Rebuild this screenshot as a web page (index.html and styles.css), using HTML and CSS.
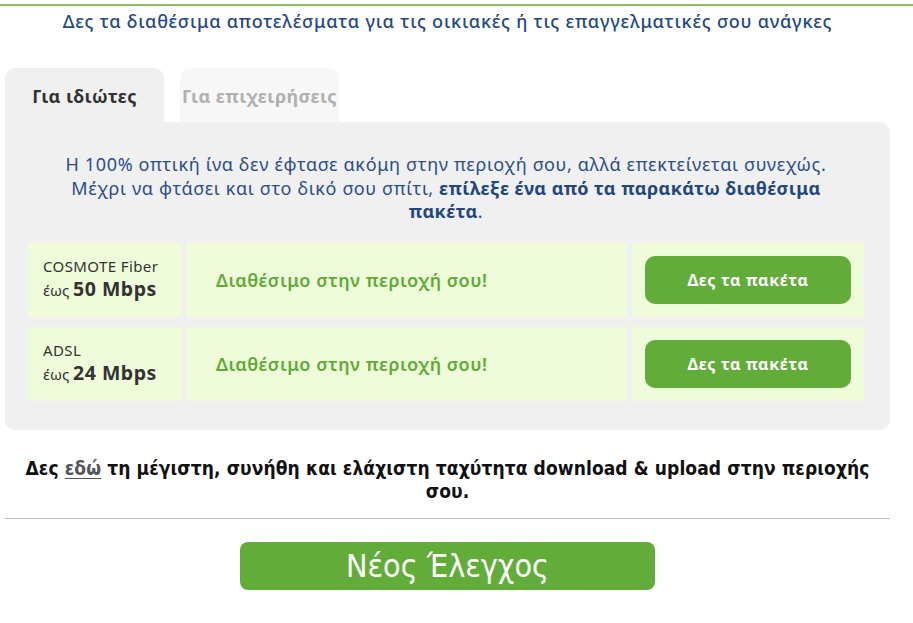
FILE: index.html
```html
<!DOCTYPE html>
<html lang="el">
<head>
<meta charset="utf-8">
<title>Διαθεσιμότητα</title>
<link rel="stylesheet" href="styles.css">
</head>
<body>
<div class="topline"></div>
<div class="wrap">
  <h2 class="heading">Δες τα διαθέσιμα αποτελέσματα για τις οικιακές ή τις επαγγελματικές σου ανάγκες</h2>
  <div class="tabs">
    <div class="tab active">Για ιδιώτες</div>
    <div class="tab">Για επιχειρήσεις</div>
  </div>
  <div class="panel">
    <p class="info">Η 100% οπτική ίνα δεν έφτασε ακόμη στην περιοχή σου, αλλά επεκτείνεται συνεχώς.<br>Μέχρι να φτάσει και στο δικό σου σπίτι, <strong>επίλεξε ένα από τα παρακάτω διαθέσιμα<br>πακέτα</strong>.</p>
    <div class="rows">
      <div class="cell name">
        <div class="tech">COSMOTE Fiber</div>
        <div class="speed">έως <b>50 Mbps</b></div>
      </div>
      <div class="cell status">Διαθέσιμο στην περιοχή σου!</div>
      <div class="cell action"><a class="btn" href="#">Δες τα πακέτα</a></div>

      <div class="cell name">
        <div class="tech">ADSL</div>
        <div class="speed">έως <b>24 Mbps</b></div>
      </div>
      <div class="cell status">Διαθέσιμο στην περιοχή σου!</div>
      <div class="cell action"><a class="btn" href="#">Δες τα πακέτα</a></div>
    </div>
  </div>
  <p class="note">Δες <a href="#">εδώ</a> τη μέγιστη, συνήθη και ελάχιστη ταχύτητα download &amp; upload στην περιοχής<br>σου.</p>
  <hr class="sep">
  <div class="again"><a class="big-btn" href="#">Νέος Έλεγχος</a></div>
</div>
</body>
</html>
```
FILE: styles.css
```css
html, body {
  margin: 0;
  padding: 0;
  background: #ffffff;
}
body {
  font-family: "Noto Sans", "Open Sans", sans-serif;
  color: #333333;
}
.topline {
  height: 4px;
  border-bottom: 2px solid #8cc063;
}
.wrap {
  width: 885px;
  margin-left: 5px;
}
.heading {
  margin: 3px 0 0;
  text-align: center;
  font-size: 18px;
  letter-spacing: 0.8px;
  font-weight: 500;
  line-height: 24px;
  color: #23498a;
}
.tabs {
  display: flex;
  gap: 16px;
  margin-top: 35px;
}
.tab {
  width: 159px;
  height: 54px;
  display: flex;
  align-items: center;
  justify-content: center;
  border-radius: 10px 10px 0 0;
  background: #f7f7f7;
  color: #b0b0b0;
  font-size: 18px;
  letter-spacing: 0.45px;
  font-weight: 700;
  padding-top: 1px;
  box-sizing: border-box;
}
.tab.active {
  background: #f0f0f0;
  color: #333333;
}
.panel {
  background: #f0f0f0;
  border-radius: 0 10px 10px 10px;
  padding: 31px 26px 29px 23px;
}
.info {
  margin: 0;
  text-align: center;
  font-size: 18px;
  letter-spacing: 0.65px;
  line-height: 23.5px;
  color: #2a4e8c;
}
.info strong {
  font-weight: 700;
  letter-spacing: 0.4px;
  color: #23467f;
}
.rows {
  margin-top: 19px;
  display: grid;
  grid-template-columns: 153px 441px 232px;
  grid-auto-rows: 74px;
  column-gap: 5px;
  row-gap: 10px;
}
.cell {
  background: #effcd9;
  display: flex;
}
.name {
  flex-direction: column;
  justify-content: center;
  padding-left: 15px;
  padding-top: 1px;
}
.tech {
  font-size: 15px;
  letter-spacing: 0.4px;
  line-height: 19px;
  color: #333333;
}
.speed {
  font-size: 15px;
  line-height: 25px;
  color: #333333;
}
.speed b {
  font-size: 19.5px;
  letter-spacing: 0.5px;
  font-weight: 700;
}
.status {
  align-items: center;
  padding-left: 30px;
  font-size: 18px;
  letter-spacing: 0.55px;
  font-weight: 600;
  color: #5eab36;
}
.action {
  padding: 13px;
}
.btn {
  flex: 1;
  display: flex;
  align-items: center;
  justify-content: center;
  background: #62ad3a;
  border-radius: 10px;
  color: #ffffff;
  text-decoration: none;
  font-size: 16px;
  letter-spacing: 0.6px;
  font-weight: 700;
}
.note {
  margin: 27px 0 0;
  padding: 0 10px;
  text-align: center;
  font-family: "DejaVu Sans Condensed", "DejaVu Sans", sans-serif;
  font-stretch: condensed;
  font-size: 19px;
  letter-spacing: 0.1px;
  font-weight: 700;
  line-height: 23px;
  color: #111111;
}
.note a {
  color: #555555;
  text-decoration: underline;
  text-underline-offset: 3px;
}
.sep {
  margin: 15px 0 0;
  border: 0;
  border-top: 1px solid #bdbdbd;
}
.again {
  display: flex;
  justify-content: center;
  margin-top: 23px;
}
.big-btn {
  width: 415px;
  height: 48px;
  display: flex;
  align-items: center;
  justify-content: center;
  background: #62ad3a;
  border-radius: 8px;
  color: #ffffff;
  text-decoration: none;
  font-family: "DejaVu Sans Condensed", "DejaVu Sans", sans-serif;
  font-stretch: condensed;
  font-size: 32px;
}
```
